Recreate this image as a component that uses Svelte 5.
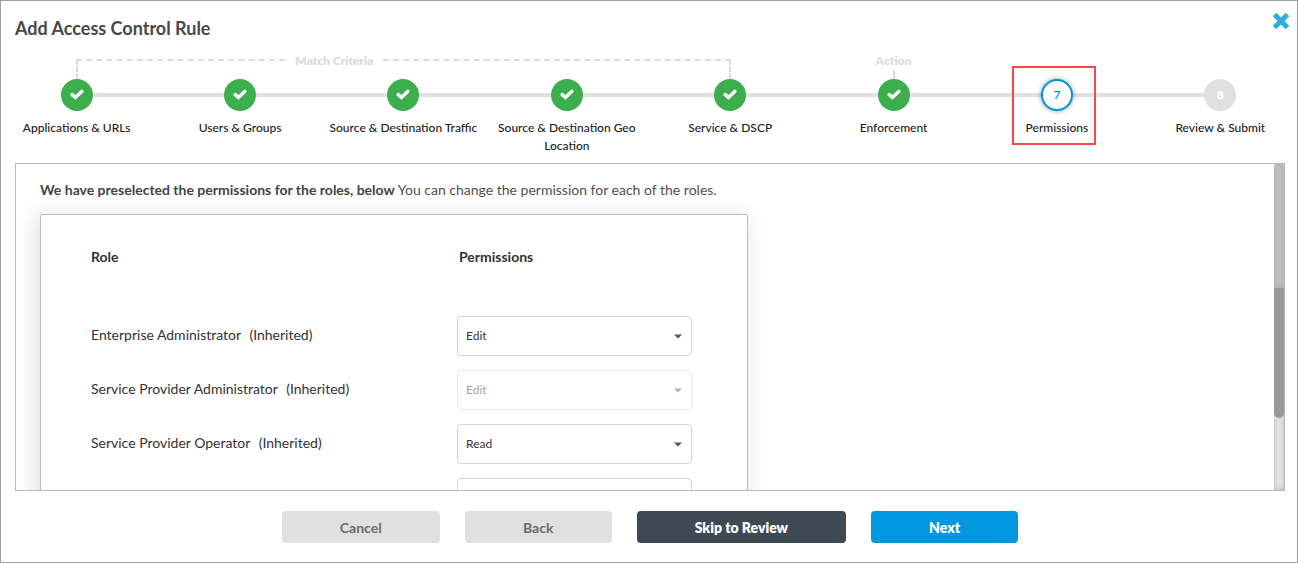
<script>
  const steps = [
    { label: 'Applications & URLs', state: 'done' },
    { label: 'Users & Groups', state: 'done' },
    { label: 'Source & Destination Traffic', state: 'done' },
    { label: 'Source & Destination Geo Location', state: 'done' },
    { label: 'Service & DSCP', state: 'done' },
    { label: 'Enforcement', state: 'done' },
    { label: 'Permissions', state: 'current' },
    { label: 'Review & Submit', state: 'todo' }
  ];

  let roles = $state([
    { name: 'Enterprise Administrator', permission: 'Edit', locked: false },
    { name: 'Service Provider Administrator', permission: 'Edit', locked: true },
    { name: 'Service Provider Operator', permission: 'Read', locked: false },
    { name: '', permission: '', locked: false }
  ]);
</script>

<main class="dialog">
  <header class="top">
    <h1>Add Access Control Rule</h1>
    <button class="close" type="button" aria-label="Close">
      <svg viewBox="0 0 16 16" width="16" height="16" aria-hidden="true">
        <path d="M3.3 3.3 12.7 12.7M12.7 3.3 3.3 12.7" fill="none" stroke="#33abe2" stroke-width="5" stroke-linecap="square" />
      </svg>
    </button>
  </header>

  <nav class="wizard" aria-label="Rule steps">
    <div class="groups">
      <div class="group criteria">
        <span class="arm left"></span>
        <span class="group-name">Match Criteria</span>
        <span class="arm right"></span>
      </div>
      <div class="group action">
        <span class="group-name">Action</span>
        <span class="stub"></span>
      </div>
    </div>
    <ol class="steps">
      {#each steps as step, i}
        <li class={step.state} aria-current={step.state === 'current' ? 'step' : undefined}>
          <span class="dot">
            {#if step.state === 'done'}
              <svg viewBox="0 0 14 12" width="14" height="12" aria-hidden="true">
                <path d="M2.2 5.6 5.4 8.4 11.8 2.4" fill="none" stroke="#fff" stroke-width="3.4" stroke-linecap="round" />
              </svg>
            {:else}
              {i + 1}
            {/if}
          </span>
          <span class="label">{step.label}</span>
          {#if step.state === 'current'}<span class="marker"></span>{/if}
        </li>
      {/each}
    </ol>
  </nav>

  <section class="panel">
    <div class="content">
      <p><strong>We have preselected the permissions for the roles, below</strong> You can change the permission for each of the roles.</p>
      <div class="card">
        <table>
          <thead>
            <tr><th class="role">Role</th><th class="perm">Permissions</th></tr>
          </thead>
          <tbody>
            {#each roles as role, i}
              <tr>
                <td>
                  {#if role.name}
                    <label for="role-{i}">{role.name} <span class="note">(Inherited)</span></label>
                  {/if}
                </td>
                <td>
                  <div class="pick" class:locked={role.locked}>
                    <select id="role-{i}" bind:value={role.permission} disabled={role.locked} aria-label={role.name ? undefined : 'Permission'}>
                      {#if !role.name}<option value=""></option>{/if}
                      <option>Edit</option>
                      <option>Read</option>
                    </select>
                    <svg viewBox="0 0 8 5" width="8" height="5" aria-hidden="true"><path d="M0 0.5h8L4 4.5z" fill="#555" /></svg>
                  </div>
                </td>
              </tr>
            {/each}
          </tbody>
        </table>
      </div>
    </div>
    <div class="scrollbar"><span class="passed"></span><span class="thumb"></span></div>
  </section>

  <footer>
    <button type="button">Cancel</button>
    <button type="button">Back</button>
    <button type="button" class="skip">Skip to Review</button>
    <button type="button" class="next">Next</button>
  </footer>
</main>

<style>
  :global(body) { margin: 0; background: #fff; }
  .dialog {
    box-sizing: border-box;
    height: 100vh;
    display: flex;
    flex-direction: column;
    padding: 0 12px 19px 14px;
    border: 1px solid #a0a0a0;
    overflow: hidden;
    background: #fff;
    color: #333;
    font-family: Lato, sans-serif;
    font-size: 14px;
    line-height: 18px;
  }
  button, select { font-family: inherit; }
  .top {
    display: flex;
    justify-content: space-between;
    align-items: flex-start;
    height: 51px;
    margin-right: -4px;
  }
  h1 { margin: 15px 0 0; font-size: 18px; line-height: 24px; font-weight: 700; color: #484848; }
  .close { display: block; margin-top: 12px; padding: 0; border: 0; background: none; width: 16px; height: 16px; cursor: pointer; }
  .close svg, .dot svg { display: block; }

  .wizard { margin: 0 -17px 8px -20px; }
  .groups, .steps { display: grid; grid-template-columns: repeat(8, 1fr); }
  .group-name { color: #dcdcdc; font-size: 12px; font-weight: 800; }
  .criteria { grid-column: 1 / 6; display: flex; align-items: flex-start; height: 27px; margin: 0 81px; gap: 10px; }
  .arm { box-sizing: border-box; height: 20px; margin-top: 7px; border-top: 2px dashed #dcdcdc; }
  .left { flex: 3; border-left: 2px dashed #dcdcdc; }
  .right { flex: 5; border-right: 2px dashed #dcdcdc; }
  .action { grid-column: 6; display: flex; flex-direction: column; align-items: center; }
  .stub { height: 9px; border-left: 2px dashed #dcdcdc; }

  .steps { margin: 0; padding: 0; list-style: none; }
  .steps li { position: relative; display: flex; flex-direction: column; align-items: center; gap: 8px; }
  .steps li:not(:last-child)::before {
    content: '';
    position: absolute;
    top: 14px;
    left: 50%;
    width: 100%;
    height: 4px;
    background: #e0e0e0;
  }
  .dot {
    position: relative;
    z-index: 1;
    box-sizing: border-box;
    width: 32px;
    height: 32px;
    display: flex;
    align-items: center;
    justify-content: center;
    border-radius: 50%;
    font-size: 12px;
  }
  .done .dot { background: #3dae4d; }
  .current .dot { background: #fff; border: 2px solid #0095db; color: #0095db; font-weight: 600; box-shadow: 0 0 5px rgba(0, 0, 0, 0.4); }
  .todo .dot { background: #e0e0e0; color: #fff; font-weight: 900; }
  .label { padding: 0 4px; font-size: 12px; font-weight: 500; text-align: center; color: #222; }
  .marker {
    position: absolute;
    z-index: 2;
    top: -13px;
    left: calc(50% - 45px);
    width: 80px;
    height: 75px;
    border: 2px solid #f94747;
  }

  .panel { flex: 1; min-height: 0; display: flex; border: 1px solid #b9b9b9; }
  .content { flex: 1; overflow: hidden; padding: 17px 24px 0; }
  p { margin: 0 0 15px; color: #505050; }
  strong { font-weight: 700; color: #444; }
  .card {
    box-sizing: border-box;
    max-width: 708px;
    padding: 0 55px 30px 50px;
    border: 1px solid #bbb;
    border-radius: 2px;
    box-shadow: -3px 3px 20px rgba(0, 0, 0, 0.14);
  }
  table { width: 100%; border-collapse: collapse; table-layout: fixed; }
  th { padding: 33px 0 43px; text-align: left; font-weight: 700; }
  .perm { width: 233px; padding-left: 2px; }
  td { padding: 7px 0; }
  td label { display: block; padding-bottom: 2px; }
  .note { margin-left: 5px; }
  .pick { position: relative; }
  .pick svg { position: absolute; top: 18px; right: 10px; pointer-events: none; }
  .locked { opacity: 0.45; }
  select {
    display: block;
    box-sizing: border-box;
    width: 100%;
    height: 40px;
    padding: 0 24px 2px 8px;
    border: 1px solid #d2d2d2;
    border-radius: 4px;
    appearance: none;
    background: #fff;
    color: #333;
    font-size: 12px;
    opacity: 1;
  }
  .scrollbar { width: 10px; display: flex; flex-direction: column; background: #e2e2e2; box-shadow: inset 0 0 5px #bbb; }
  .passed { height: 38%; border-radius: 5px 5px 0 0; background: #c0c0c0; box-shadow: inset 0 0 5px #aaa; }
  .thumb { height: 40%; border-radius: 0 0 5px 5px; background: #999; }

  footer { display: flex; justify-content: center; gap: 25px; padding-top: 20px; }
  footer button {
    height: 32px;
    min-width: 147px;
    padding: 0 58px;
    border: 0;
    border-radius: 4px;
    background: #e0e0e0;
    color: #6b6b6b;
    font-size: 14px;
    font-weight: 700;
    cursor: pointer;
  }
  footer .skip, footer .next { color: #fff; font-weight: 800; }
  footer .skip { background: #3e4a53; }
  footer .next { background: #0097de; }
</style>
